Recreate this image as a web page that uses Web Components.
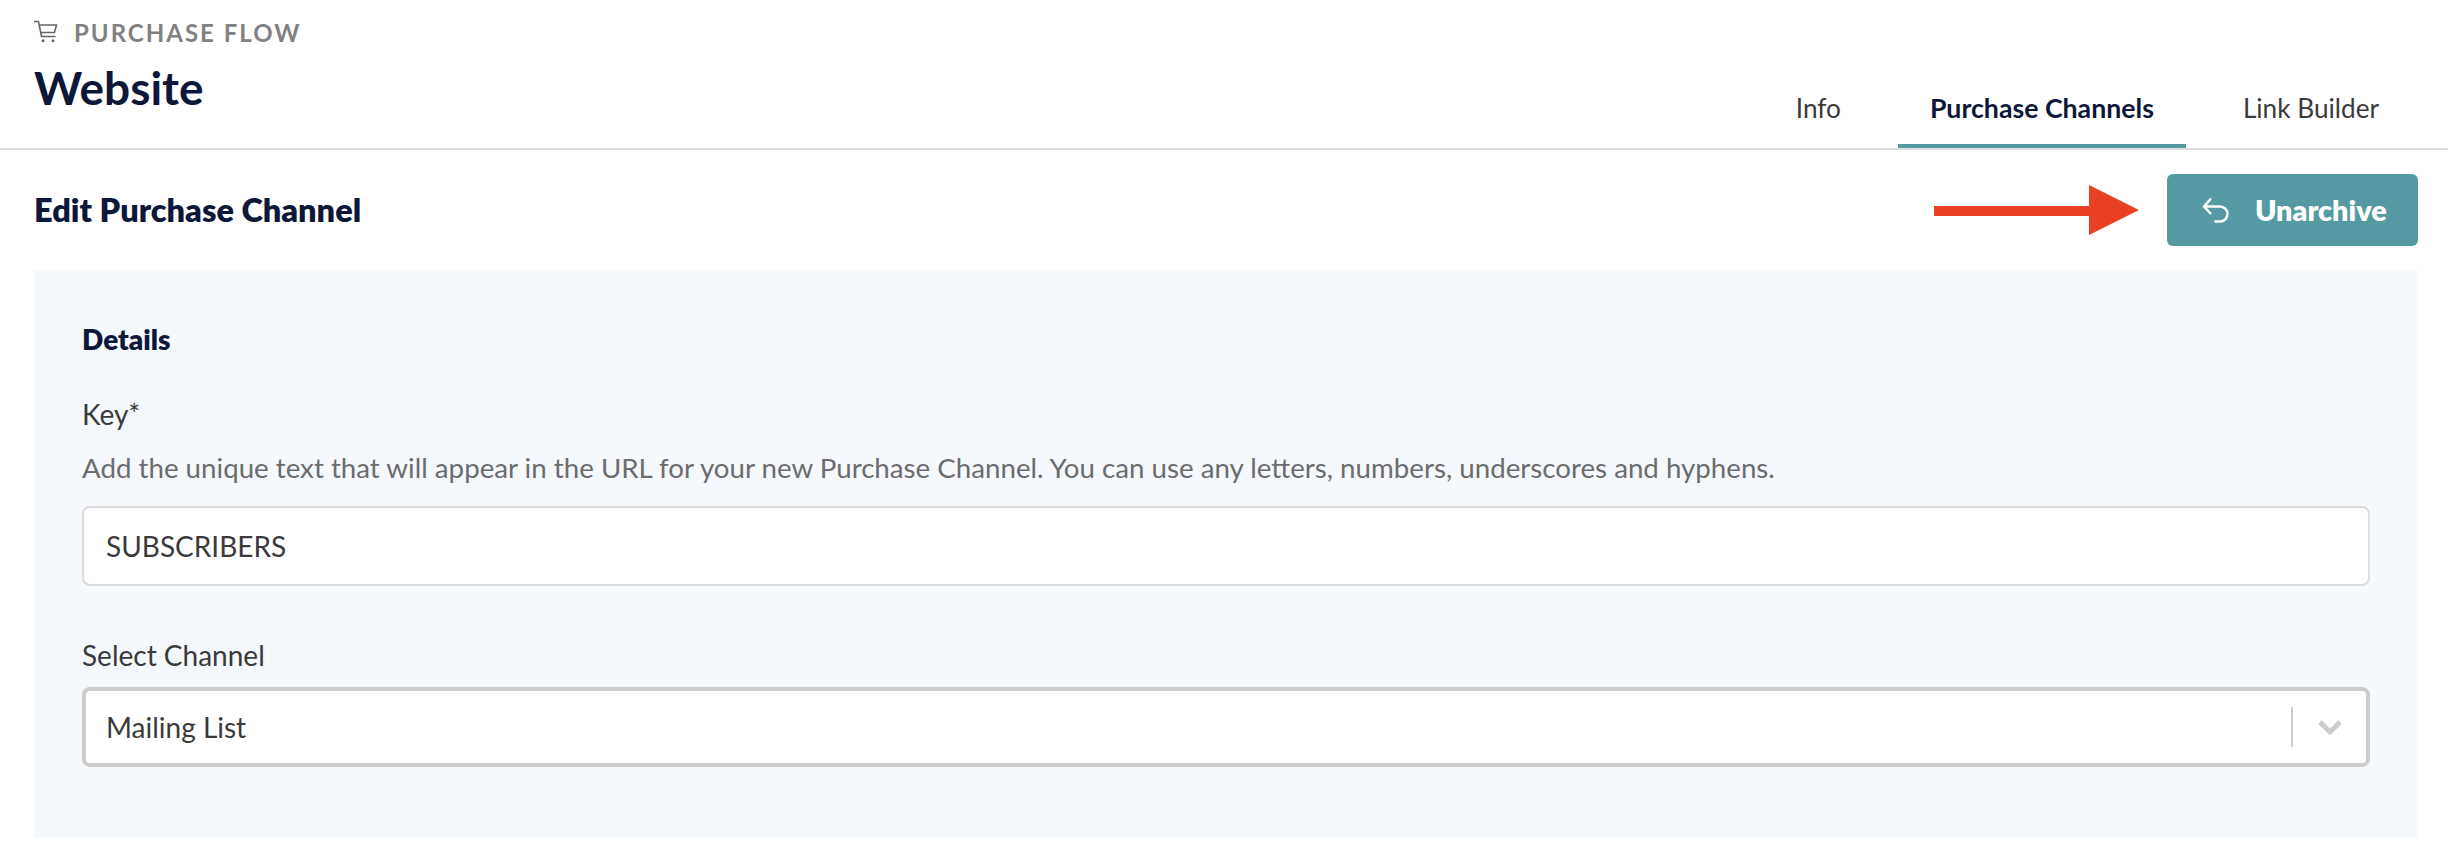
<!DOCTYPE html>
<html>
<head>
<meta charset="utf-8">
<title>Edit Purchase Channel</title>
<style>
  html, body { margin: 0; background: #fff; }
  body { font-family: Lato, "Liberation Sans", sans-serif; color: #333; height: 860px; overflow: hidden; }
</style>
</head>
<body>
<page-header eyebrow="PURCHASE FLOW" heading="Website">
  <tab-item>Info</tab-item>
  <tab-item active>Purchase Channels</tab-item>
  <tab-item>Link Builder</tab-item>
</page-header>
<action-bar heading="Edit Purchase Channel">
  <unarchive-button>Unarchive</unarchive-button>
</action-bar>
<form-panel heading="Details">
  <form-field label="Key*" hint="Add the unique text that will appear in the URL for your new Purchase Channel. You can use any letters, numbers, underscores and hyphens.">
    <text-box>SUBSCRIBERS</text-box>
  </form-field>
  <form-field label="Select Channel">
    <select-box>Mailing List</select-box>
  </form-field>
</form-panel>
<script>
class PageHeader extends HTMLElement {
  constructor() {
    super();
    this.attachShadow({ mode: 'open' }).innerHTML = `
      <style>
        :host { display: flex; justify-content: space-between; height: 148px; border-bottom: 2px solid #ddd; padding-left: 34px; box-sizing: content-box; }
        .eyebrow { display: flex; align-items: center; gap: 16px; height: 24px; margin-top: 20px; color: #818181; font-size: 24px; font-weight: 700; letter-spacing: 2px; }
        svg { width: 24px; height: 24px; display: block; }
        h1 { margin: 12px 0 0; font-size: 46px; line-height: 64px; font-weight: 700; color: #0d173a; }
        nav { display: flex; align-items: flex-end; gap: 25px; padding-right: 37px; }
      </style>
      <div>
        <div class="eyebrow">
          <svg viewBox="0 0 24 24" fill="none" stroke="#666" stroke-width="1.6">
            <path d="M0 1.5h4.5l3 15h14"/>
            <path d="M5 5h17.5l-2 7.5H6.5"/>
            <circle cx="9" cy="20.8" r="1.5" fill="#666" stroke="none"/>
            <circle cx="19" cy="20.8" r="1.5" fill="#666" stroke="none"/>
          </svg>
          <span>${this.getAttribute('eyebrow')}</span>
        </div>
        <h1>${this.getAttribute('heading')}</h1>
      </div>
      <nav><slot></slot></nav>`;
  }
}

class TabItem extends HTMLElement {
  constructor() {
    super();
    this.attachShadow({ mode: 'open' }).innerHTML = `
      <style>
        :host { display: block; height: 70px; padding: 0 32px; font-size: 26.2px; line-height: 68px; color: #3a3a3a; border-bottom: 4px solid transparent; }
        :host([active]) { font-size: 26.7px; font-weight: 700; color: #0d173a; border-bottom-color: #559aa2; }
      </style>
      <slot></slot>`;
  }
}

class ActionBar extends HTMLElement {
  constructor() {
    super();
    this.attachShadow({ mode: 'open' }).innerHTML = `
      <style>
        :host { display: flex; justify-content: space-between; align-items: center; height: 72px; margin: 24px 30px 24px 34px; }
        h2 { margin: 0 0 1px; font-size: 32.5px; font-weight: 800; color: #0d173a; }
        .right { display: flex; align-items: center; gap: 28px; }
        svg { display: block; width: 205px; height: 50px; }
      </style>
      <h2>${this.getAttribute('heading')}</h2>
      <div class="right">
        <svg viewBox="0 0 205 50"><path fill="#ea4023" d="M0 21h155V0l50 25-50 25V31H0z"/></svg>
        <slot></slot>
      </div>`;
  }
}

class UnarchiveButton extends HTMLElement {
  constructor() {
    super();
    this.attachShadow({ mode: 'open' }).innerHTML = `
      <style>
        :host { display: flex; align-items: center; gap: 26px; box-sizing: border-box; width: 251px; height: 72px; padding-left: 35px; background: #559aa2; border-radius: 6px; color: #fff; font-size: 28.8px; font-weight: 800; }
        svg { display: block; width: 27px; height: 27px; }
      </style>
      <svg viewBox="0 0 27 27" fill="none" stroke="#fff" stroke-width="2.5">
        <path d="M9 1.5L2 9.5l7 7.5"/>
        <path d="M2 9.5H18a7.5 7.5 0 0 1 0 15h-5.5"/>
      </svg>
      <slot></slot>`;
  }
}

class FormPanel extends HTMLElement {
  constructor() {
    super();
    this.attachShadow({ mode: 'open' }).innerHTML = `
      <style>
        :host { display: block; box-sizing: border-box; height: 568px; margin: 0 30px 0 34px; padding: 53px 48px 0; background: #f5f8fd; }
        h3 { margin: 0 0 41px; font-size: 28px; line-height: 32px; font-weight: 800; color: #0d173a; }
      </style>
      <h3>${this.getAttribute('heading')}</h3>
      <slot></slot>`;
  }
}

class FormField extends HTMLElement {
  constructor() {
    super();
    const hint = this.getAttribute('hint');
    this.attachShadow({ mode: 'open' }).innerHTML = `
      <style>
        :host { display: block; margin-bottom: 51px; }
        label { display: block; font-size: 28px; line-height: 36px; color: #3a3a3a; margin-bottom: 14px; }
        p { margin: 18px 0 20px; font-size: 27.7px; line-height: 36px; color: #6c6c6c; white-space: nowrap; }
      </style>
      <label>${this.getAttribute('label')}</label>
      ${hint ? `<p>${hint}</p>` : ''}
      <slot></slot>`;
  }
}

class TextBox extends HTMLElement {
  constructor() {
    super();
    this.attachShadow({ mode: 'open' }).innerHTML = `
      <style>
        :host { display: flex; align-items: center; box-sizing: border-box; height: 80px; padding-left: 22px; background: #fff; border: 2px solid #ddd; border-radius: 8px; font-size: 28px; color: #3a3a3a; }
      </style>
      <slot></slot>`;
  }
}

class SelectBox extends HTMLElement {
  constructor() {
    super();
    this.attachShadow({ mode: 'open' }).innerHTML = `
      <style>
        :host { display: flex; align-items: center; box-sizing: border-box; height: 80px; padding-left: 20px; background: #fff; border: 4px solid #ccc; border-radius: 8px; font-size: 28px; color: #3a3a3a; }
        .value { flex: 1; }
        .sep { width: 2px; height: 40px; background: #ccc; }
        svg { display: block; width: 24px; height: 16px; margin: 0 24px 0 25px; }
      </style>
      <div class="value"><slot></slot></div>
      <div class="sep"></div>
      <svg viewBox="0 0 24 16" fill="none" stroke="#ccc" stroke-width="5"><path d="M2 3l10 10L22 3"/></svg>`;
  }
}

customElements.define('page-header', PageHeader);
customElements.define('tab-item', TabItem);
customElements.define('action-bar', ActionBar);
customElements.define('unarchive-button', UnarchiveButton);
customElements.define('form-panel', FormPanel);
customElements.define('form-field', FormField);
customElements.define('text-box', TextBox);
customElements.define('select-box', SelectBox);
</script>
</body>
</html>
